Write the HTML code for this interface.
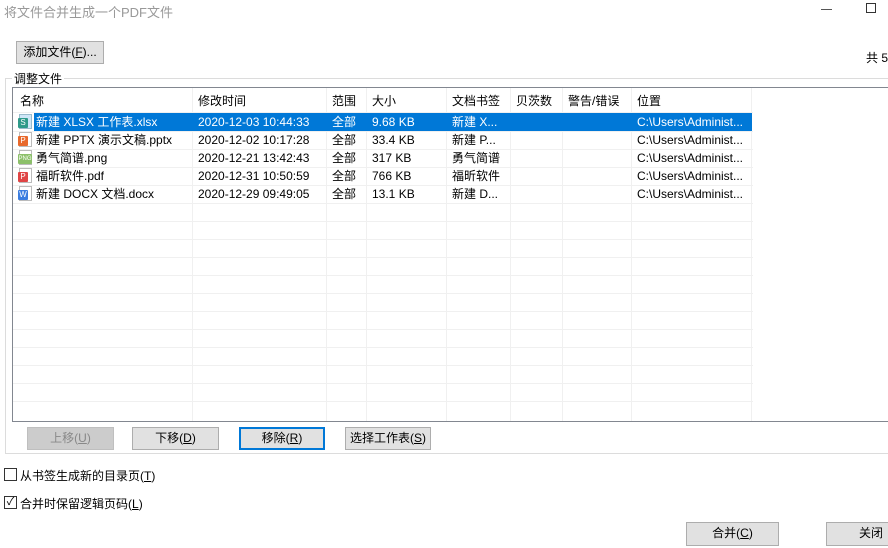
<!DOCTYPE html>
<html><head><meta charset="utf-8"><style>
*{margin:0;padding:0;box-sizing:border-box}
body{width:888px;height:548px;background:#fff;position:relative;overflow:hidden;font-family:"Liberation Sans","Noto Sans CJK SC",sans-serif;font-size:12px;color:#000}
.a{position:absolute;white-space:nowrap}
.btn{position:absolute;background:#e1e1e1;border:1px solid #adadad;text-align:center;line-height:20px;font-size:12px;white-space:nowrap}
.grid{position:absolute;left:12px;top:87px;width:890px;height:335px;border:1px solid #828790;border-right:none;overflow:hidden}
.vl{position:absolute;top:0;bottom:0;width:1px;background:#f0f0f0}
.hl{position:absolute;left:0;width:740px;height:1px;background:#f0f0f0}
.cell{position:absolute;line-height:18px;height:18px;white-space:nowrap}
.row{position:absolute;left:0;width:740px;height:18px}
.ic{position:absolute;width:13px;height:15px;border:1px solid #bbb;background:#fff}
.ic i{position:absolute;left:-2px;top:3px;width:10px;height:10px;color:#fff;font-style:normal;font-size:8px;line-height:10px;text-align:center;border-radius:1px}
.cb{position:absolute;width:13px;height:13px;border:1px solid #333;background:#fff}
</style></head><body>
<div class="a" style="left:4px;top:2px;color:#999;font-size:13px">将文件合并生成一个PDF文件</div>
<div class="a" style="left:821px;top:9px;width:11px;height:1px;background:#555"></div>
<div class="a" style="left:866px;top:3px;width:10px;height:10px;border:1px solid #333"></div>
<div class="btn" style="left:16px;top:41px;width:88px;height:23px">添加文件(<u>F</u>)...</div>
<div class="a" style="left:866px;top:49px">共 5</div>
<div class="a" style="left:5px;top:78px;width:890px;height:376px;border:1px solid #dcdcdc"></div>
<div class="a" style="left:12px;top:70px;background:#fff;padding:0 2px">调整文件</div>
<div class="grid">
<div class="vl" style="left:179px"></div><div class="vl" style="left:313px"></div><div class="vl" style="left:353px"></div><div class="vl" style="left:433px"></div><div class="vl" style="left:497px"></div><div class="vl" style="left:549px"></div><div class="vl" style="left:618px"></div><div class="vl" style="left:738px"></div>
<div class="hl" style="top:24px"></div>
<div class="hl" style="top:43px"></div><div class="hl" style="top:61px"></div><div class="hl" style="top:79px"></div><div class="hl" style="top:97px"></div><div class="hl" style="top:115px"></div><div class="hl" style="top:133px"></div><div class="hl" style="top:151px"></div><div class="hl" style="top:169px"></div><div class="hl" style="top:187px"></div><div class="hl" style="top:205px"></div><div class="hl" style="top:223px"></div><div class="hl" style="top:241px"></div><div class="hl" style="top:259px"></div><div class="hl" style="top:277px"></div><div class="hl" style="top:295px"></div><div class="hl" style="top:313px"></div>
<div class="cell" style="top:4px;left:7px">名称</div><div class="cell" style="top:4px;left:185px">修改时间</div><div class="cell" style="top:4px;left:319px">范围</div><div class="cell" style="top:4px;left:359px">大小</div><div class="cell" style="top:4px;left:439px">文档书签</div><div class="cell" style="top:4px;left:503px">贝茨数</div><div class="cell" style="top:4px;left:555px">警告/错误</div><div class="cell" style="top:4px;left:624px">位置</div>
<div class="a" style="left:21px;top:25px;width:718px;height:18px;background:#0078d7"></div>
<div class="row" style="top:25px;color:#fff">
<div class="cell" style="left:23px">新建 XLSX 工作表.xlsx</div><div class="cell" style="left:185px">2020-12-03 10:44:33</div><div class="cell" style="left:319px">全部</div><div class="cell" style="left:359px">9.68 KB</div><div class="cell" style="left:439px">新建 X...</div><div class="cell" style="left:624px">C:\Users\Administ...</div></div>
<div class="row" style="top:43px">
<div class="cell" style="left:23px">新建 PPTX 演示文稿.pptx</div><div class="cell" style="left:185px">2020-12-02 10:17:28</div><div class="cell" style="left:319px">全部</div><div class="cell" style="left:359px">33.4 KB</div><div class="cell" style="left:439px">新建 P...</div><div class="cell" style="left:624px">C:\Users\Administ...</div></div>
<div class="row" style="top:61px">
<div class="cell" style="left:23px">勇气简谱.png</div><div class="cell" style="left:185px">2020-12-21 13:42:43</div><div class="cell" style="left:319px">全部</div><div class="cell" style="left:359px">317 KB</div><div class="cell" style="left:439px">勇气简谱</div><div class="cell" style="left:624px">C:\Users\Administ...</div></div>
<div class="row" style="top:79px">
<div class="cell" style="left:23px">福昕软件.pdf</div><div class="cell" style="left:185px">2020-12-31 10:50:59</div><div class="cell" style="left:319px">全部</div><div class="cell" style="left:359px">766 KB</div><div class="cell" style="left:439px">福昕软件</div><div class="cell" style="left:624px">C:\Users\Administ...</div></div>
<div class="row" style="top:97px">
<div class="cell" style="left:23px">新建 DOCX 文档.docx</div><div class="cell" style="left:185px">2020-12-29 09:49:05</div><div class="cell" style="left:319px">全部</div><div class="cell" style="left:359px">13.1 KB</div><div class="cell" style="left:439px">新建 D...</div><div class="cell" style="left:624px">C:\Users\Administ...</div></div>
<div class="ic" style="left:6px;top:26px;background:#cfe6f7;border-color:#9bc"><i style="background:#2e9a8a">S</i></div>
<div class="ic" style="left:6px;top:44px"><i style="background:#e8692c">P</i></div>
<div class="ic" style="left:6px;top:62px"><i style="background:#8cc06a;width:14px;font-size:6px">PNG</i></div>
<div class="ic" style="left:6px;top:80px"><i style="background:#e04545">P</i></div>
<div class="ic" style="left:6px;top:98px"><i style="background:#3b7de0">W</i></div>
</div>
<div class="btn" style="left:27px;top:427px;width:87px;height:23px;background:#cccccc;border-color:#bfbfbf;color:#888">上移(<u>U</u>)</div>
<div class="btn" style="left:132px;top:427px;width:87px;height:23px">下移(<u>D</u>)</div>
<div class="btn" style="left:239px;top:427px;width:86px;height:23px;border:2px solid #0078d7;line-height:19px">移除(<u>R</u>)</div>
<div class="btn" style="left:345px;top:427px;width:86px;height:23px">选择工作表(<u>S</u>)</div>
<div class="cb" style="left:4px;top:468px"></div>
<div class="a" style="left:20px;top:467px">从书签生成新的目录页(<u>T</u>)</div>
<div class="cb" style="left:4px;top:496px;font-size:11px;line-height:11px;text-align:center">✓</div>
<div class="a" style="left:20px;top:495px">合并时保留逻辑页码(<u>L</u>)</div>
<div class="btn" style="left:686px;top:522px;width:93px;height:24px">合并(<u>C</u>)</div>
<div class="btn" style="left:826px;top:522px;width:80px;height:24px;text-align:left;padding-left:32px">关闭</div>
</body></html>
